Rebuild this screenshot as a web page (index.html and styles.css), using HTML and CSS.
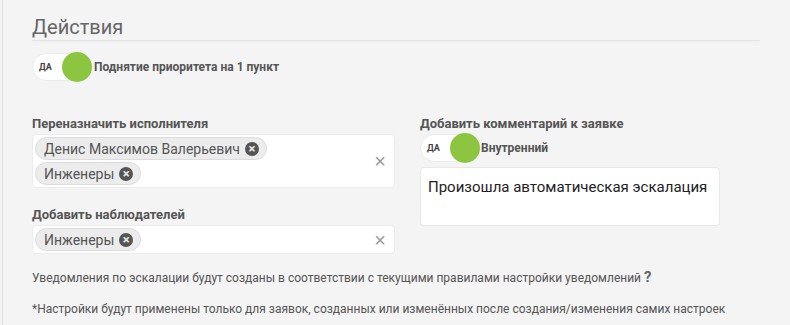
FILE: index.html
```html
<!DOCTYPE html>
<html lang="ru">
<head>
    <meta charset="UTF-8">
    <meta name="viewport" content="width=device-width, initial-scale=1.0">
    <title>Действия</title>
    <link rel="stylesheet" href="styles.css">
</head>
<body>
    <div class="panel">
        <h2 class="section-title">Действия</h2>

        <div class="toggle-row first-toggle">
            <span class="toggle"><span class="toggle-text">ДА</span><span class="knob"></span></span>
            <span class="toggle-label">Поднятие приоритета на 1 пункт</span>
        </div>

        <div class="columns">
            <div class="column">
                <div class="field-label">Переназначить исполнителя</div>
                <div class="select-box">
                    <div class="tags">
                        <span class="tag">Денис Максимов Валерьевич <span class="tag-remove">&times;</span></span>
                        <span class="tag">Инженеры <span class="tag-remove">&times;</span></span>
                    </div>
                    <span class="clear">&times;</span>
                </div>

                <div class="field-label second-label">Добавить наблюдателей</div>
                <div class="select-box">
                    <div class="tags">
                        <span class="tag">Инженеры <span class="tag-remove">&times;</span></span>
                    </div>
                    <span class="clear">&times;</span>
                </div>
            </div>

            <div class="column">
                <div class="field-label">Добавить комментарий к заявке</div>
                <div class="toggle-row">
                    <span class="toggle small"><span class="toggle-text">ДА</span><span class="knob"></span></span>
                    <span class="toggle-label">Внутренний</span>
                </div>
                <div class="comment-box">Произошла автоматическая эскалация</div>
            </div>
        </div>

        <p class="note">Уведомления по эскалации будут созданы в соответствии с текущими правилами настройки уведомлений <span class="help">?</span></p>
        <p class="note">*Настройки будут применены только для заявок, созданных или изменённых после создания/изменения самих настроек</p>
    </div>
</body>
</html>
```

FILE: styles.css
```css
body {
    margin: 0;
    background-color: #f4f4f4;
    font-family: Roboto, "Liberation Sans", Arial, sans-serif;
    color: #555;
    height: 325px;
    overflow: hidden;
}
.panel {
    margin-left: 2px;
    border-left: 1px solid #e2e2e2;
    padding: 15px 30px 0 29px;
    height: 325px;
    box-sizing: border-box;
}
.section-title {
    margin: 0;
    font-size: 20px;
    font-weight: 400;
    line-height: 24px;
    color: #666;
    padding-bottom: 1px;
    border-bottom: 1px solid #e4e4e4;
    box-shadow: 0 2px 2px -1px rgba(0, 0, 0, 0.03);
}
.toggle-row {
    display: flex;
    align-items: center;
    gap: 3px;
}
.first-toggle {
    margin-top: 12px;
}
.toggle {
    position: relative;
    display: inline-block;
    width: 58px;
    height: 28px;
    box-sizing: border-box;
    background: #fff;
    border: 1px solid #ebebeb;
    border-radius: 14px;
    flex-shrink: 0;
}
.toggle.small {
    width: 57px;
}
.toggle-text {
    position: absolute;
    left: 6px;
    top: 8px;
    font-size: 9px;
    font-weight: 700;
    line-height: 10px;
    color: #444;
}
.knob {
    position: absolute;
    left: 29px;
    top: -2px;
    width: 30px;
    height: 30px;
    border-radius: 50%;
    background: #8cc540;
}
.toggle-label {
    font-size: 12px;
    font-weight: 700;
    color: #555;
    margin-left: 1px;
}
.columns {
    display: grid;
    grid-template-columns: 363px 300px;
    column-gap: 25px;
    margin-top: 36px;
}
.field-label {
    font-size: 13px;
    font-weight: 700;
    line-height: 14px;
    color: #555;
    margin-bottom: 3px;
}
.second-label {
    margin-top: 20px;
}
.select-box {
    display: flex;
    align-items: center;
    background: #fff;
    border: 1px solid #ececec;
    border-radius: 4px;
    padding: 2px 8px 2px 2px;
}
.tags {
    flex: 1;
    display: flex;
    flex-direction: column;
    align-items: flex-start;
    gap: 2px;
}
.tag {
    display: inline-flex;
    align-items: center;
    height: 23px;
    box-sizing: border-box;
    padding: 0 7px 0 8px;
    background: #ececec;
    border: 1px solid #dcdcdc;
    border-radius: 12px;
    font-size: 14px;
    color: #555;
}
.tag-remove {
    display: inline-flex;
    align-items: center;
    justify-content: center;
    width: 14px;
    height: 14px;
    margin-left: 5px;
    border-radius: 50%;
    background: #555;
    color: #ececec;
    font-size: 13px;
    font-weight: 700;
    line-height: 14px;
}
.clear {
    font-family: "Liberation Sans", Arial, sans-serif;
    font-size: 20px;
    color: #999;
    line-height: 20px;
}
.comment-box {
    margin-top: 5px;
    height: 59px;
    box-sizing: border-box;
    background: #fff;
    border: 1px solid #e8e8e8;
    border-radius: 4px;
    padding: 9px 7px;
    font-size: 15px;
    line-height: 20px;
    color: #222;
    white-space: nowrap;
}
.note {
    margin: 16px 0 0;
    font-size: 12px;
    line-height: 14px;
    color: #555;
}
.note + .note {
    margin-top: 17px;
}
.help {
    font-size: 15px;
    font-weight: 700;
    color: #666;
}
```
